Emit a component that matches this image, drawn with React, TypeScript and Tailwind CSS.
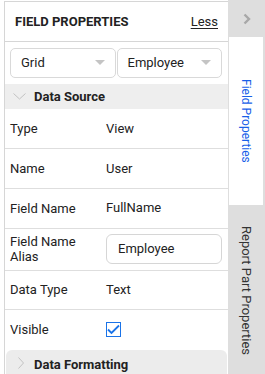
import React from "react";

const font = { fontFamily: "Roboto, 'Noto Sans', sans-serif" };

function Caret() {
  return (
    <svg width="10" height="6" viewBox="0 0 10 6" className="shrink-0">
      <path d="M0 0 L10 0 L5 5 Z" fill="#c4c4c4" />
    </svg>
  );
}

function Select({ label }: { label: string }) {
  return (
    <div className="flex-1 h-[30px] flex items-center justify-between pl-[10px] pr-[10px] border border-[#d9d9d9] rounded-[5px] text-[13px] text-[#222]">
      <span>{label}</span>
      <Caret />
    </div>
  );
}

function Row({ label, children, h = "h-[40px]" }: { label: React.ReactNode; children: React.ReactNode; h?: string }) {
  return (
    <div className={`flex items-center ${h} border-b border-[#dedede] text-[13px] text-[#222]`}>
      <div className="w-[101px] pl-[5px] leading-[15px]">{label}</div>
      <div className="flex-1 pr-[6px]">{children}</div>
    </div>
  );
}

export default function App() {
  return (
    <div className="flex w-[265px] h-[374px] bg-white overflow-hidden" style={font}>
      <div className="ml-[4px] mt-[1px] w-[224px] border-l border-t border-[#d6d6d6] flex flex-col">
        <div className="h-[40px] flex items-center justify-between pl-[10px] pr-[10px] border-b border-[#d6d6d6]">
          <span className="text-[13px] font-bold text-[#222]">FIELD PROPERTIES</span>
          <span className="text-[13px] text-[#222] underline underline-offset-2">Less</span>
        </div>
        <div className="flex gap-[1px] pl-[5px] pr-[6px] pt-[6px]">
          <Select label="Grid" />
          <Select label="Employee" />
        </div>
        <div className="mt-[6px] h-[25px] bg-[#eeeeee] flex items-center pl-[8px] gap-[8px]">
          <svg width="13" height="7" viewBox="0 0 13 7">
            <polyline points="0.5,0.5 6.5,6 12.5,0.5" fill="none" stroke="#c2c2c2" strokeWidth="1" />
          </svg>
          <span className="text-[13px] font-bold text-[#222]">Data Source</span>
        </div>
        <Row label="Type">View</Row>
        <Row label="Name">User</Row>
        <Row label="Field Name">FullName</Row>
        <Row label={<>Field Name<br />Alias</>} h="h-[42px]">
          <div className="h-[30px] border border-[#d6d6d6] rounded-[6px] flex items-center pl-[11px] text-[13px]">Employee</div>
        </Row>
        <Row label="Data Type" h="h-[39px]">Text</Row>
        <div className="flex items-center h-[40px] text-[13px] text-[#222]">
          <div className="w-[101px] pl-[5px]">Visible</div>
          <div className="w-[15px] h-[15px] border border-[#1a73e8] flex items-center justify-center">
            <svg width="13" height="11" viewBox="0 0 13 11">
              <polyline points="1,5.5 4.5,9 12,1.5" fill="none" stroke="#1a73e8" strokeWidth="1.8" />
            </svg>
          </div>
        </div>
        <div className="mx-[1px] flex-1 bg-[#ececec] rounded-t-[6px] flex items-start pt-[5px] pl-[12px] gap-[10px]">
          <svg width="6" height="12" viewBox="0 0 6 12" className="mt-[2px]">
            <polyline points="0.5,0.5 5.5,6 0.5,11.5" fill="none" stroke="#c2c2c2" strokeWidth="1" />
          </svg>
          <span className="text-[13px] font-bold text-[#222]">Data Formatting</span>
        </div>
      </div>
      <div className="w-[37px] bg-[#dedede] flex flex-col">
        <div className="h-[37px] flex items-center justify-center">
          <svg width="8" height="12" viewBox="0 0 8 12">
            <polyline points="1.5,1.5 6,6 1.5,10.5" fill="none" stroke="#a8a8a8" strokeWidth="2.4" />
          </svg>
        </div>
        <div className="h-[168px] ml-[1px] mr-[2px] bg-white flex items-center justify-center">
          <span className="[writing-mode:vertical-rl] text-[12px] text-[#1a5fe8]">Field Properties</span>
        </div>
        <div className="flex-1 flex justify-center pt-[21px]">
          <span className="[writing-mode:vertical-rl] text-[13px] text-[#333]">Report Part Properties</span>
        </div>
      </div>
    </div>
  );
}
